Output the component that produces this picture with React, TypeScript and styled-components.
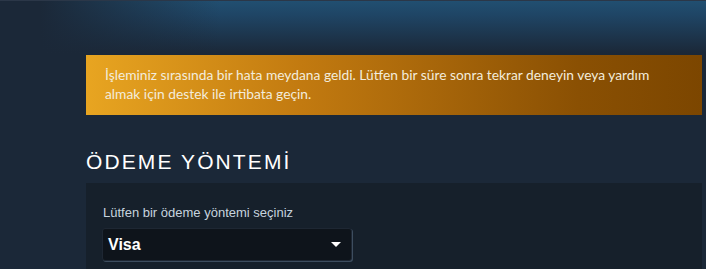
import React from "react";
import styled, { createGlobalStyle } from "styled-components";

const Global = createGlobalStyle`
  html, body {
    margin: 0;
    padding: 0;
    background: #1b2838;
  }
  body {
    font-family: "Liberation Sans", Arial, sans-serif;
    color: #c6d4df;
  }
`;

const Page = styled.div`
  min-height: 269px;
  border-top: 1px solid #2b3748;
  background:
    linear-gradient(to right, #1b2838 40px, rgba(27, 40, 56, 0) 220px) 0 0 / 100% 56px no-repeat,
    linear-gradient(to bottom, #214f71 0px, #1f4565 14px, #1b2838 52px) 0 0 / 100% 56px no-repeat,
    #1b2838;
`;

const Content = styled.div`
  width: 616px;
  margin-left: 86px;
  padding-top: 54px;
`;

const Alert = styled.div`
  background: linear-gradient(to right, #e8a521 0%, #c27a10 35%, #8a5003 80%, #7c4600 100%);
  color: #f3ecdc;
  font-family: Lato, "Liberation Sans", Arial, sans-serif;
  font-size: 13.8px;
  line-height: 19px;
  padding: 10px 26px 12px 19px;
`;

const Heading = styled.h2`
  margin: 34px 0 8px;
  font-size: 21px;
  line-height: 26px;
  font-weight: 400;
  letter-spacing: 2.1px;
  color: #ffffff;
  text-transform: uppercase;
`;

const Panel = styled.div`
  background: #16202b;
  padding: 22px 16px 8px;
`;

const Label = styled.div`
  font-size: 13px;
  line-height: 16px;
  color: #c6d4df;
  padding-left: 1px;
  margin-bottom: 7px;
`;

const Select = styled.div`
  width: 250px;
  height: 33px;
  box-sizing: border-box;
  background: #0e141b;
  border: 1px solid #1e2733;
  box-shadow: 1px 1px 0 #3d4d5f;
  border-radius: 3px;
  display: flex;
  align-items: center;
  justify-content: space-between;
  padding: 0 10px 0 5px;
  color: #ffffff;
  font-size: 16px;
  font-weight: 700;
`;

const Arrow = styled.span`
  width: 0;
  height: 0;
  border-left: 5px solid transparent;
  border-right: 5px solid transparent;
  border-top: 5px solid #ffffff;
`;

export default function App() {
  return (
    <>
      <Global />
      <Page>
        <Content>
          <Alert>
            İşleminiz sırasında bir hata meydana geldi. Lütfen bir süre sonra tekrar deneyin veya yardım almak için destek ile irtibata geçin.
          </Alert>
          <Heading>ÖDEME YÖNTEMİ</Heading>
          <Panel>
            <Label>Lütfen bir ödeme yöntemi seçiniz</Label>
            <Select>
              <span>Visa</span>
              <Arrow />
            </Select>
          </Panel>
        </Content>
      </Page>
    </>
  );
}
